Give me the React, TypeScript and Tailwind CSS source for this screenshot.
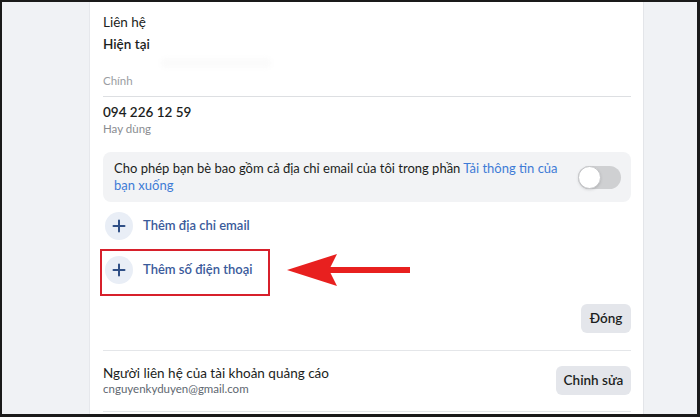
import React from "react";

const font = { fontFamily: 'Lato, "Noto Sans", sans-serif' };

function PlusCircle() {
  return (
    <div className="w-[28px] h-[28px] rounded-full bg-[#e9eef6] flex items-center justify-center">
      <svg width="14" height="14" viewBox="0 0 14 14">
        <path d="M7 1.5v11M1.5 7h11" stroke="#2f4f86" strokeWidth="2" strokeLinecap="round" />
      </svg>
    </div>
  );
}

export default function App() {
  return (
    <div className="w-[700px] h-[417px] bg-[#1a1a1a] pt-[2px] pl-[2px] pr-[3px] pb-[3px] overflow-hidden" style={font}>
      <div className="flex h-full">
        <div className="w-[88px] bg-[#f0f2f5] border-r border-[#e6e8ec]" />
        <div className="relative w-[553px] bg-white px-[13px] pr-[12px] text-[#1c1e21]">
          <div className="h-[11px]" />
          <div className="h-[18px] flex items-center text-[13.5px]">Liên hệ</div>
          <div className="h-[4px]" />
          <div className="h-[18px] flex items-center text-[13.5px] font-semibold">Hiện tại</div>
          <div className="h-[20px] flex items-center">
            <div className="ml-[58px] w-[110px] h-[10px] rounded bg-[#fbfbfb] blur-[2px]" />
          </div>
          <div className="h-[16px] flex items-center text-[11.5px] text-[#9a9da2]">Chính</div>
          <div className="h-[7px]" />
          <div className="border-t border-[#dddfe2]" />
          <div className="h-[6px]" />
          <div className="h-[18px] flex items-center text-[13.5px] font-semibold">094 226 12 59</div>
          <div className="h-[16px] flex items-center text-[11.5px] text-[#8a8d91]">Hay dùng</div>
          <div className="h-[15px]" />
          <div className="h-[50px] rounded-[8px] bg-[#f2f3f5] flex items-center pl-[11px] pr-[10px]">
            <div className="flex-1 text-[13px] leading-[17px]">
              Cho phép bạn bè bao gồm cả địa chỉ email của tôi trong phần{" "}
              <span className="text-[#3e7bd6]">Tải thông tin của bạn xuống</span>
            </div>
            <div className="w-[43px] h-[23px] rounded-full bg-[#cfd0d2] flex items-center ml-[20px]">
              <div className="w-[23px] h-[23px] rounded-full bg-white border border-[#c4c5c8] shadow-sm" />
            </div>
          </div>
          <div className="h-[10px]" />
          <div className="h-[28px] flex items-center gap-[10px] pl-[2px]">
            <PlusCircle />
            <span className="text-[13px] font-semibold text-[#3b5b9b]">Thêm địa chỉ email</span>
          </div>
          <div className="h-[16px]" />
          <div className="h-[28px] flex items-center gap-[10px] pl-[2px]">
            <PlusCircle />
            <span className="text-[13px] font-semibold text-[#3b5b9b]">Thêm số điện thoại</span>
          </div>
          <div className="h-[20px]" />
          <div className="flex justify-end">
            <div className="h-[29px] w-[50px] rounded-[6px] bg-[#e4e6eb] flex items-center justify-center text-[13.5px] font-semibold">Đóng</div>
          </div>
          <div className="h-[17px]" />
          <div className="border-t border-[#e4e6e9]" />
          <div className="h-[15px] flex" />
          <div className="flex items-center justify-between h-[29px]">
            <div className="flex flex-col">
              <span className="text-[13.5px] leading-[16px]">Người liên hệ của tài khoản quảng cáo</span>
              <span className="text-[11.5px] leading-[16px] text-[#606770]">cnguyenkyduyen@gmail.com</span>
            </div>
            <div className="h-[29px] w-[75px] rounded-[6px] bg-[#e4e6eb] flex items-center justify-center text-[13.5px] font-semibold">Chỉnh sửa</div>
          </div>
          <div className="h-[16px]" />
          <div className="border-t border-[#e4e6e9]" />

          <div className="absolute left-[10px] top-[247px] w-[170px] h-[47px] border-2 border-[#d7202b]" />
          <svg className="absolute left-[195px] top-[249px]" width="132" height="38" viewBox="0 0 132 38">
            <polygon points="2,19 52,3 44,19 52,35" fill="#e8201f" />
            <rect x="44" y="16" width="81" height="6" fill="#e8201f" />
          </svg>
        </div>
        <div className="flex-1 bg-[#f0f2f5] border-l border-[#e3e5e9]" />
      </div>
    </div>
  );
}
